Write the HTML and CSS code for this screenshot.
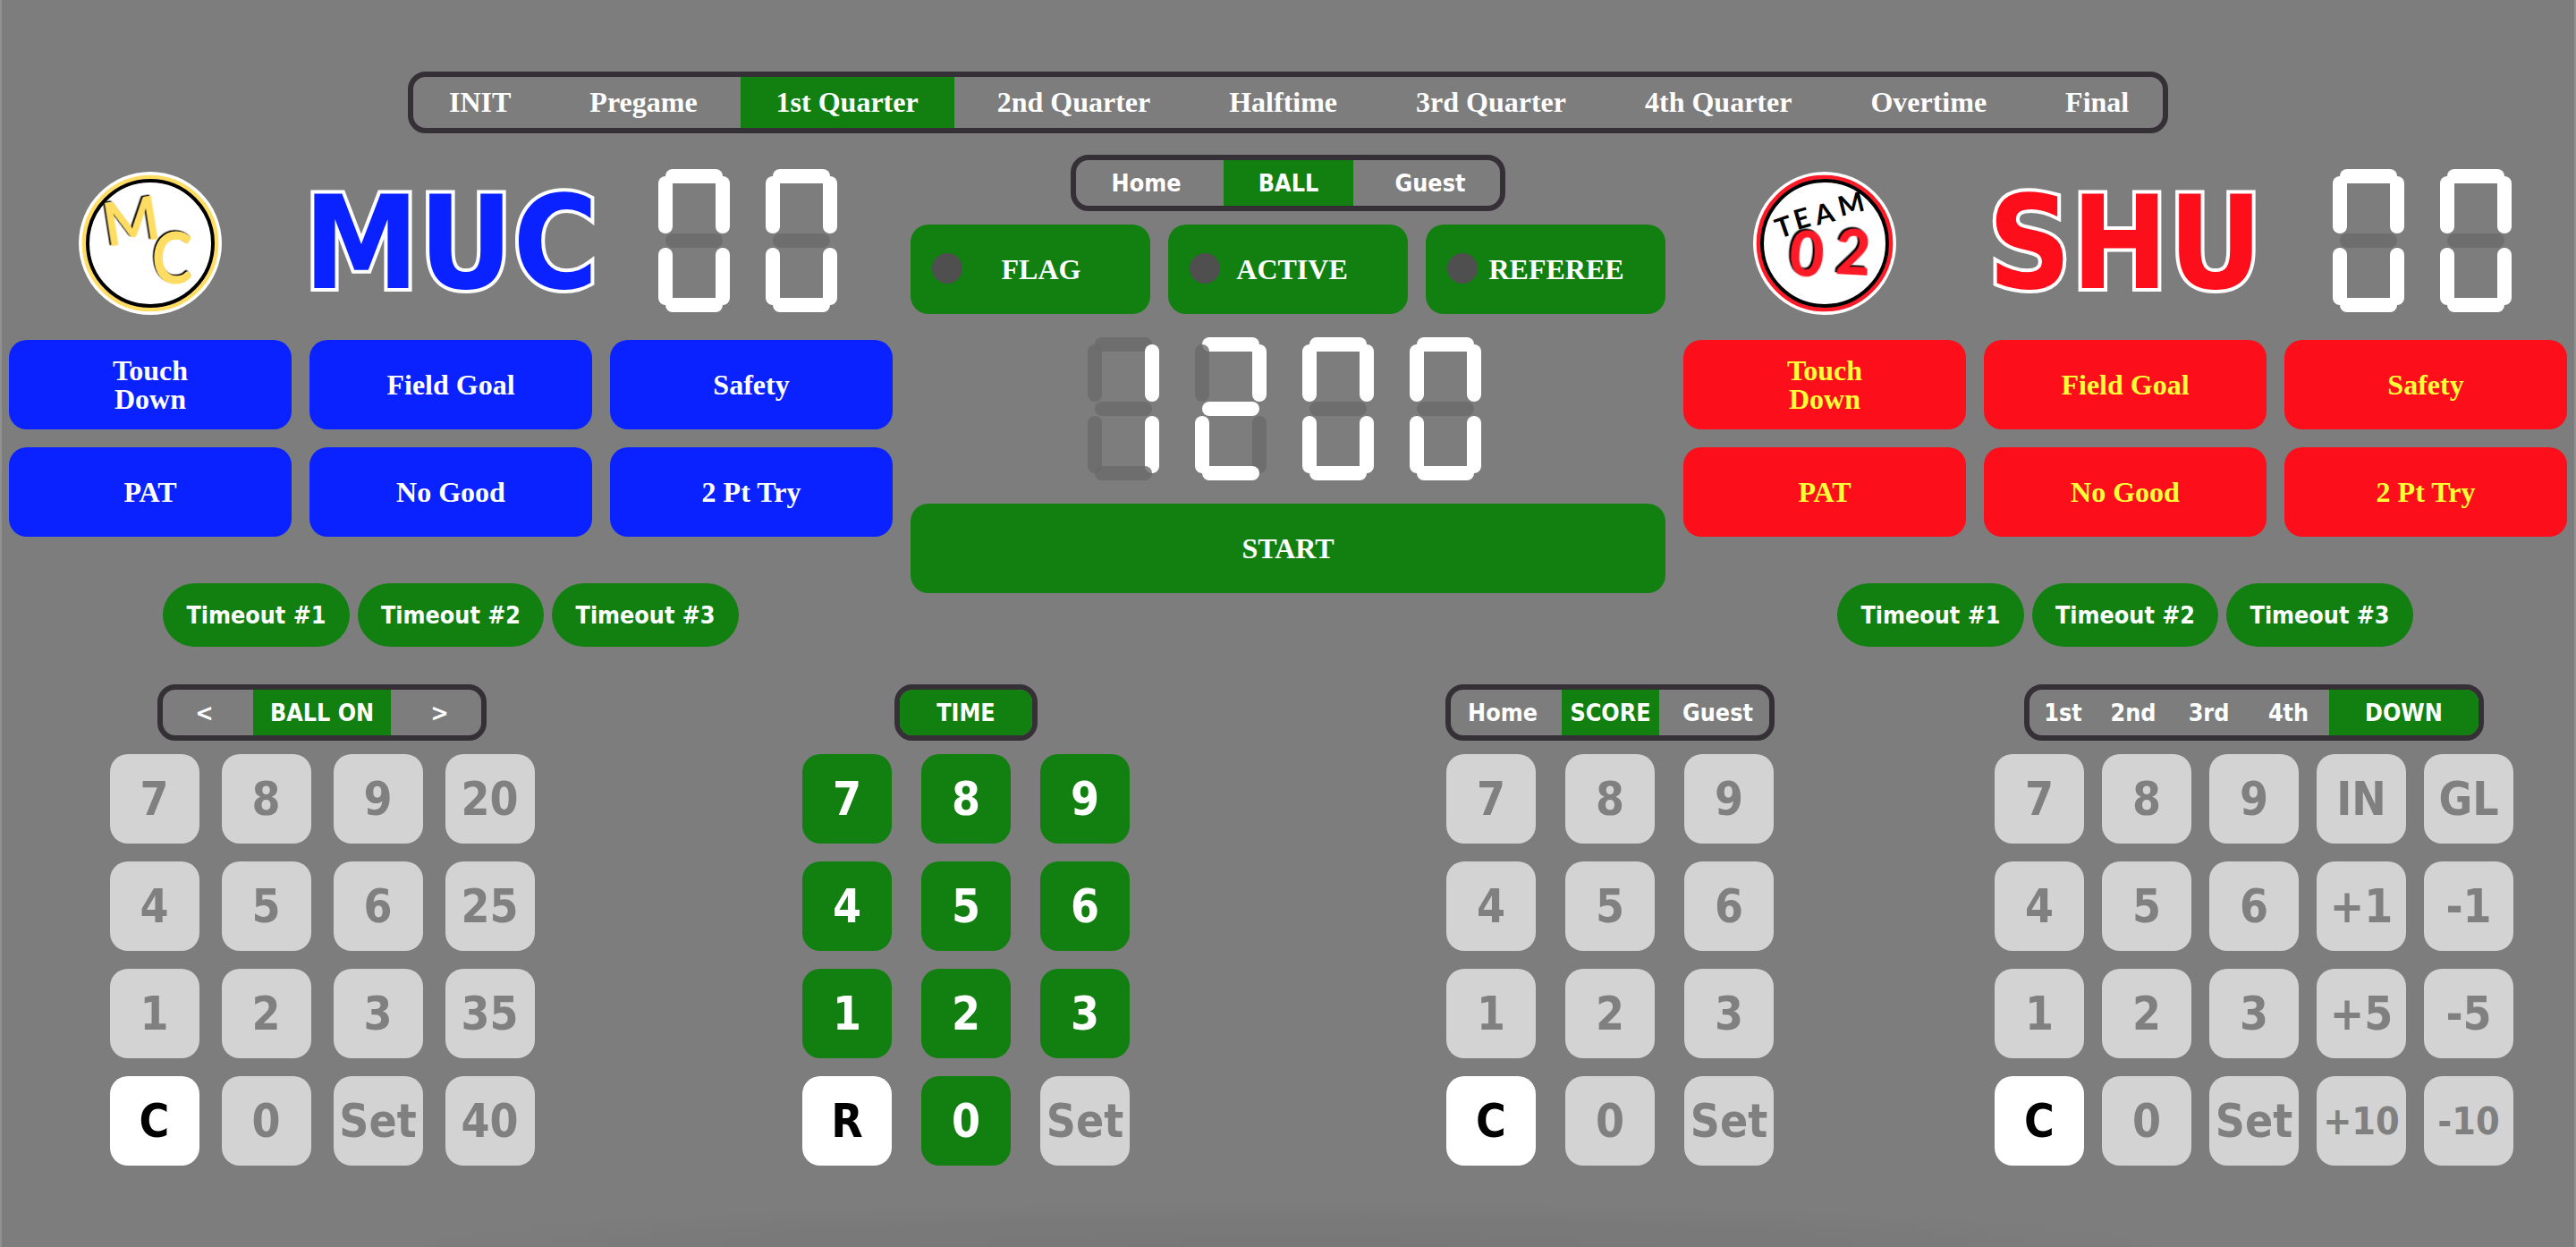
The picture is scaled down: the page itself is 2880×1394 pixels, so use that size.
FILE: index.html
```html
<!DOCTYPE html>
<html lang="en">
<head>
<meta charset="utf-8">
<title>Scoreboard Controller</title>
<link rel="stylesheet" href="styles.css">
</head>
<body>
<svg class="defs" width="0" height="0" aria-hidden="true">
  <symbol id="digit-0" viewBox="0 0 80 160">
    <rect class="on" x="8" y="0" width="64" height="16" rx="8"/>
    <rect class="on" x="0" y="8" width="16" height="64" rx="8"/>
    <rect class="on" x="64" y="8" width="16" height="64" rx="8"/>
    <rect class="off" x="8" y="72" width="64" height="16" rx="8"/>
    <rect class="on" x="0" y="88" width="16" height="64" rx="8"/>
    <rect class="on" x="64" y="88" width="16" height="64" rx="8"/>
    <rect class="on" x="8" y="144" width="64" height="16" rx="8"/>
  </symbol>
  <symbol id="digit-1" viewBox="0 0 80 160">
    <rect class="off" x="8" y="0" width="64" height="16" rx="8"/>
    <rect class="off" x="0" y="8" width="16" height="64" rx="8"/>
    <rect class="on" x="64" y="8" width="16" height="64" rx="8"/>
    <rect class="off" x="8" y="72" width="64" height="16" rx="8"/>
    <rect class="off" x="0" y="88" width="16" height="64" rx="8"/>
    <rect class="on" x="64" y="88" width="16" height="64" rx="8"/>
    <rect class="off" x="8" y="144" width="64" height="16" rx="8"/>
  </symbol>
  <symbol id="digit-2" viewBox="0 0 80 160">
    <rect class="on" x="8" y="0" width="64" height="16" rx="8"/>
    <rect class="off" x="0" y="8" width="16" height="64" rx="8"/>
    <rect class="on" x="64" y="8" width="16" height="64" rx="8"/>
    <rect class="on" x="8" y="72" width="64" height="16" rx="8"/>
    <rect class="on" x="0" y="88" width="16" height="64" rx="8"/>
    <rect class="off" x="64" y="88" width="16" height="64" rx="8"/>
    <rect class="on" x="8" y="144" width="64" height="16" rx="8"/>
  </symbol>
</svg>

<nav class="menu periods">
  <span>INIT</span><span>Pregame</span><span class="active">1st Quarter</span><span>2nd Quarter</span><span>Halftime</span><span>3rd Quarter</span><span>4th Quarter</span><span>Overtime</span><span>Final</span>
</nav>

<main class="board">
  <section class="team home">
    <div class="team-head">
      <svg class="logo" viewBox="55 66 480 480">
        <circle cx="295" cy="306" r="240" fill="#fff"/>
        <circle cx="295" cy="306" r="222" fill="none" stroke="#ffdc62" stroke-width="14"/>
        <circle cx="295" cy="306" r="210" fill="none" stroke="#000" stroke-width="12"/>
        <text class="mark-m" transform="translate(149 318) rotate(-9)">M</text>
        <text class="mark-c" transform="translate(300 442) scale(.86 1)">C</text>
      </svg>
      <div class="team-name">MUC</div>
      <div class="digits"><svg><use href="#digit-0"/></svg><svg><use href="#digit-0"/></svg></div>
    </div>
    <div class="plays">
      <button>Touch<br>Down</button><button>Field Goal</button><button>Safety</button>
      <button>PAT</button><button>No Good</button><button>2 Pt Try</button>
    </div>
    <div class="timeouts"><button>Timeout #1</button><button>Timeout #2</button><button>Timeout #3</button></div>
  </section>

  <section class="center">
    <nav class="menu ball"><span>Home</span><span class="active">BALL</span><span>Guest</span></nav>
    <div class="flags">
      <button class="shifted"><i></i>FLAG</button><button class="nudged"><i></i>ACTIVE</button><button class="shifted"><i></i>REFEREE</button>
    </div>
    <div class="digits clock"><svg><use href="#digit-1"/></svg><svg><use href="#digit-2"/></svg><svg><use href="#digit-0"/></svg><svg><use href="#digit-0"/></svg></div>
    <button class="start">START</button>
  </section>

  <section class="team guest">
    <div class="team-head">
      <svg class="logo" viewBox="60 66 480 480">
        <circle cx="300" cy="306" r="240" fill="#fff"/>
        <circle cx="300" cy="306" r="222" fill="none" stroke="#ff1a27" stroke-width="14"/>
        <circle cx="300" cy="306" r="210" fill="none" stroke="#000" stroke-width="12"/>
        <text class="mark-num" transform="translate(177 412) rotate(4) scale(.95 1)">0</text>
        <text class="mark-num" transform="translate(334 408) rotate(3) scale(.95 1)">2</text>
        <text class="mark-team" transform="translate(148 291) rotate(-19)">T</text>
        <text class="mark-team" transform="translate(207 262) rotate(-16)">E</text>
        <text class="mark-team" transform="translate(275 246) rotate(-14)">A</text>
        <text class="mark-team" transform="translate(354 216) rotate(-14)">M</text>
      </svg>
      <div class="team-name">SHU</div>
      <div class="digits"><svg><use href="#digit-0"/></svg><svg><use href="#digit-0"/></svg></div>
    </div>
    <div class="plays">
      <button>Touch<br>Down</button><button>Field Goal</button><button>Safety</button>
      <button>PAT</button><button>No Good</button><button>2 Pt Try</button>
    </div>
    <div class="timeouts"><button>Timeout #1</button><button>Timeout #2</button><button>Timeout #3</button></div>
  </section>
</main>

<footer class="pads">
  <section class="pad">
    <nav class="menu ball-on"><span>&lt;</span><span class="active">BALL ON</span><span>&gt;</span></nav>
    <div class="keys keys-four">
      <button>7</button><button>8</button><button>9</button><button>20</button>
      <button>4</button><button>5</button><button>6</button><button>25</button>
      <button>1</button><button>2</button><button>3</button><button>35</button>
      <button class="clear">C</button><button>0</button><button>Set</button><button>40</button>
    </div>
  </section>
  <section class="pad live">
    <nav class="menu time"><span class="active">TIME</span></nav>
    <div class="keys">
      <button>7</button><button>8</button><button>9</button>
      <button>4</button><button>5</button><button>6</button>
      <button>1</button><button>2</button><button>3</button>
      <button class="clear">R</button><button>0</button><button class="disabled">Set</button>
    </div>
  </section>
  <section class="pad">
    <nav class="menu score"><span>Home</span><span class="active">SCORE</span><span>Guest</span></nav>
    <div class="keys">
      <button>7</button><button>8</button><button>9</button>
      <button>4</button><button>5</button><button>6</button>
      <button>1</button><button>2</button><button>3</button>
      <button class="clear">C</button><button>0</button><button>Set</button>
    </div>
  </section>
  <section class="pad">
    <nav class="menu down"><span>1st</span><span>2nd</span><span>3rd</span><span>4th</span><span class="active">DOWN</span></nav>
    <div class="keys keys-five">
      <button>7</button><button>8</button><button>9</button><button>IN</button><button>GL</button>
      <button>4</button><button>5</button><button>6</button><button>+1</button><button>-1</button>
      <button>1</button><button>2</button><button>3</button><button>+5</button><button>-5</button>
      <button class="clear">C</button><button>0</button><button>Set</button><button class="small">+10</button><button class="small">-10</button>
    </div>
  </section>
</footer>
</body>
</html>
```
FILE: styles.css
```css
* { box-sizing: border-box; }

:root {
  --bg: #7d7d7d;
  --green: #118011;
  --frame: #352f36;
  --serif: "Liberation Serif", "Times New Roman", serif;
  --sans: "DejaVu Sans Condensed", "DejaVu Sans", sans-serif;
}

body {
  margin: 0;
  height: 1394px;
  padding-top: 80px;
  overflow: hidden;
  color: #fff;
  background: radial-gradient(ellipse 1000px 50px at 50% 100%, #777 0%, #797979 60%, transparent 100%) var(--bg);
  box-shadow: inset 2px 0 #919191, inset -2px 0 #919191;
  font-family: var(--serif);
  font-weight: bold;
}

.defs { position: absolute; }
.on { fill: #fff; }
.off { fill: #6a6a6a; opacity: .8; }

button {
  margin: 0;
  padding: 0;
  border: 0;
  border-radius: 20px;
  color: #fff;
  background: var(--green);
  font: bold 32px/32px var(--serif);
}

/* Framed selector bars */
.menu {
  display: grid;
  gap: 8px;
  width: max-content;
  height: 63px;
  border: 6px solid var(--frame);
  border-radius: 20px;
  overflow: hidden;
  font-family: var(--sans);
  font-size: 26.67px;
}
.menu span {
  display: flex;
  align-items: center;
  justify-content: center;
  white-space: nowrap;
}
.menu .active { background: var(--green); }

.periods {
  display: flex;
  width: 1968px;
  height: 69px;
  margin: 0 auto;
  font-family: var(--serif);
  font-size: 32px;
}
.periods span { padding: 0 40px; }
.ball { grid-template-columns: 157px 145px 156px; }
.ball-on { grid-template-columns: 93px 154px 93px; }
.time { grid-template-columns: 148px; }
.score { grid-template-columns: 116px 109px 115px; }
.down { grid-template-columns: 75px 66px 87px 75px 167px; }

/* Upper board */
.board {
  display: grid;
  grid-template-columns: 1008px 864px 1008px;
  height: 574px;
  padding-top: 24px;
}
.team-head {
  display: grid;
  grid-template-columns: repeat(3, 336px);
  align-items: center;
  justify-items: center;
  height: 198px;
}
.logo { width: 160px; height: 160px; }
.team-name {
  font: bold 144px/198px var(--sans);
  -webkit-text-stroke: 8px #fff;
  paint-order: stroke fill;
}
.home .team-name { color: #0922ff; }
.guest .team-name { color: #fd0e1b; }

.digits {
  display: flex;
  gap: 40px;
  padding: 0 8px 6px 0;
}
.digits svg { width: 80px; height: 160px; }

.plays {
  display: grid;
  grid-template-columns: repeat(3, 316px);
  grid-auto-rows: 100px;
  gap: 20px;
  padding: 9px 10px;
}
.home .plays button { background: #0922ff; }
.guest .plays button { background: #fd0e1b; color: #ffff39; }

.timeouts {
  display: grid;
  grid-template-columns: repeat(3, 1fr);
  gap: 8.6px;
  width: 644px;
  margin: 43px auto 0;
}
.timeouts button {
  height: 71px;
  border-radius: 36px;
  font: bold 26.67px/32px var(--sans);
}

.center {
  display: flex;
  flex-direction: column;
  align-items: center;
}
.flags {
  display: grid;
  grid-template-columns: repeat(3, 268px);
  gap: 20px;
  margin-top: 15px;
}
.flags button { position: relative; height: 100px; }
.flags .shifted { padding-left: 24px; }
.flags .nudged { padding-left: 9px; }
.flags i {
  position: absolute;
  left: 24px;
  top: 32px;
  width: 34px;
  height: 34px;
  border-radius: 50%;
  background: #4f4f4f;
}
.clock { margin-top: 26px; }
.start { width: 844px; height: 100px; margin-top: 20px; }

/* Keypads */
.pads {
  display: grid;
  grid-template-columns: repeat(4, 720px);
  padding-top: 42px;
}
.pad {
  display: flex;
  flex-direction: column;
  align-items: center;
  gap: 15px;
}
.keys {
  display: grid;
  grid-template-columns: repeat(3, 100px);
  grid-auto-rows: 100px;
  gap: 20px 33px;
}
.keys-four { grid-template-columns: repeat(4, 100px); column-gap: 25px; }
.keys-five { grid-template-columns: repeat(5, 100px); column-gap: 20px; }
.keys button {
  color: #808080;
  background: #d3d3d3;
  font: bold 51.2px/60px var(--sans);
}
.live .keys button { color: #fff; background: var(--green); }
.keys .clear, .live .keys .clear { color: #000; background: #fff; }
.live .keys .disabled { color: #808080; background: #d3d3d3; }
.keys .small { font-size: 42.7px; }

/* Team logo lettering */
.mark-m, .mark-c {
  fill: #ffdc62;
  font-family: Lato, sans-serif;
  font-weight: 700;
  filter: drop-shadow(-5px -4px 0 #000);
}
.mark-m { font-size: 200px; }
.mark-c { font-size: 240px; }
.mark-num {
  fill: #ff1a27;
  font: 900 212px Lato, sans-serif;
  filter: drop-shadow(-7px -5px 0 #000);
}
.mark-team { fill: #000; font: 700 92px Lato, sans-serif; }
```
